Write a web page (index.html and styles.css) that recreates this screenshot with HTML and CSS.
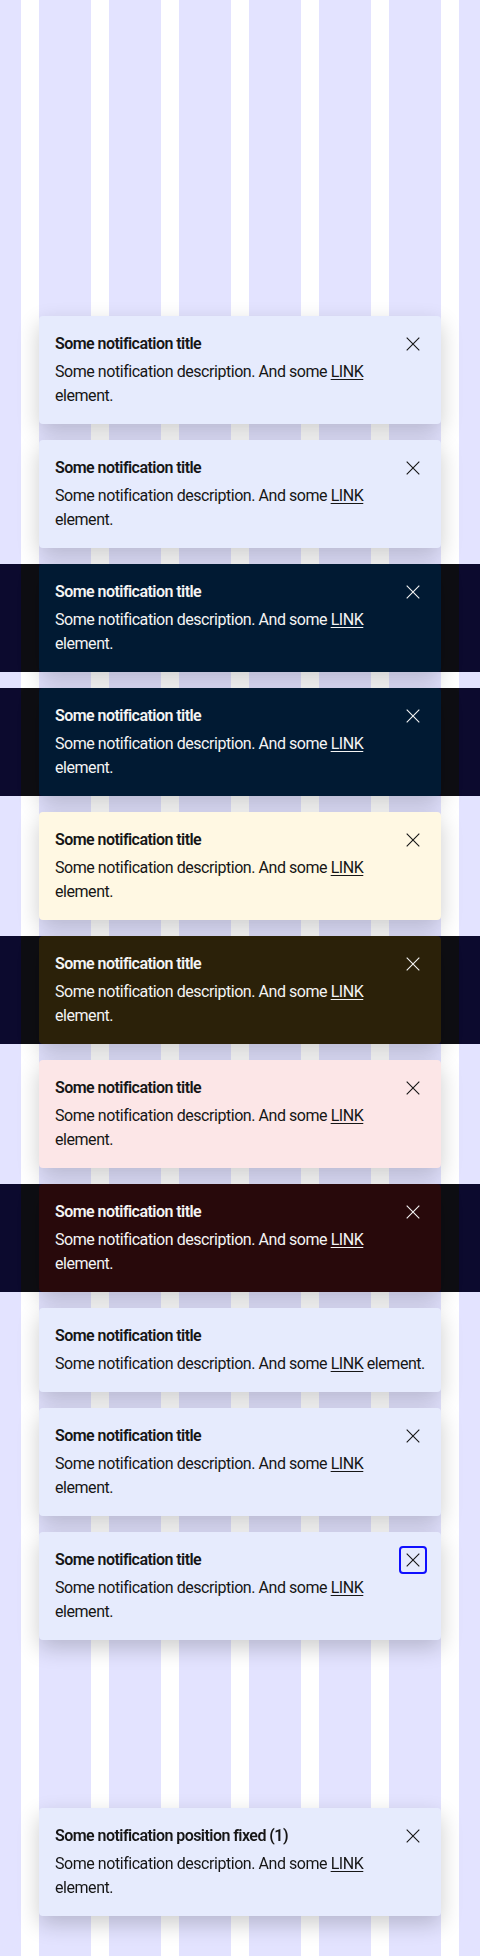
FILE: index.html
```html
<!DOCTYPE html>
<html lang="en">
<head>
<meta charset="utf-8">
<title>Notifications</title>
<link rel="stylesheet" href="styles.css">
</head>
<body>
<main class="stack">

  <div class="notif light">
    <div class="notif-body">
      <div class="notif-title">Some notification title</div>
      <div class="notif-desc">Some notification description. And some <a href="#" class="notif-link">LINK</a> element.</div>
    </div>
    <button class="notif-close" aria-label="Close"><svg viewBox="0 0 14 14" width="14" height="14"><path d="M0.7 0.7L13.3 13.3M13.3 0.7L0.7 13.3"/></svg></button>
  </div>

  <div class="notif light">
    <div class="notif-body">
      <div class="notif-title">Some notification title</div>
      <div class="notif-desc">Some notification description. And some <a href="#" class="notif-link">LINK</a> element.</div>
    </div>
    <button class="notif-close" aria-label="Close"><svg viewBox="0 0 14 14" width="14" height="14"><path d="M0.7 0.7L13.3 13.3M13.3 0.7L0.7 13.3"/></svg></button>
  </div>

  <div class="band">
    <div class="notif dark navy">
      <div class="notif-body">
        <div class="notif-title">Some notification title</div>
        <div class="notif-desc">Some notification description. And some <a href="#" class="notif-link">LINK</a> element.</div>
      </div>
      <button class="notif-close" aria-label="Close"><svg viewBox="0 0 14 14" width="14" height="14"><path d="M0.7 0.7L13.3 13.3M13.3 0.7L0.7 13.3"/></svg></button>
    </div>
  </div>

  <div class="band">
    <div class="notif dark navy">
      <div class="notif-body">
        <div class="notif-title">Some notification title</div>
        <div class="notif-desc">Some notification description. And some <a href="#" class="notif-link">LINK</a> element.</div>
      </div>
      <button class="notif-close" aria-label="Close"><svg viewBox="0 0 14 14" width="14" height="14"><path d="M0.7 0.7L13.3 13.3M13.3 0.7L0.7 13.3"/></svg></button>
    </div>
  </div>

  <div class="notif light warning">
    <div class="notif-body">
      <div class="notif-title">Some notification title</div>
      <div class="notif-desc">Some notification description. And some <a href="#" class="notif-link">LINK</a> element.</div>
    </div>
    <button class="notif-close" aria-label="Close"><svg viewBox="0 0 14 14" width="14" height="14"><path d="M0.7 0.7L13.3 13.3M13.3 0.7L0.7 13.3"/></svg></button>
  </div>

  <div class="band">
    <div class="notif dark brown">
      <div class="notif-body">
        <div class="notif-title">Some notification title</div>
        <div class="notif-desc">Some notification description. And some <a href="#" class="notif-link">LINK</a> element.</div>
      </div>
      <button class="notif-close" aria-label="Close"><svg viewBox="0 0 14 14" width="14" height="14"><path d="M0.7 0.7L13.3 13.3M13.3 0.7L0.7 13.3"/></svg></button>
    </div>
  </div>

  <div class="notif light error">
    <div class="notif-body">
      <div class="notif-title">Some notification title</div>
      <div class="notif-desc">Some notification description. And some <a href="#" class="notif-link">LINK</a> element.</div>
    </div>
    <button class="notif-close" aria-label="Close"><svg viewBox="0 0 14 14" width="14" height="14"><path d="M0.7 0.7L13.3 13.3M13.3 0.7L0.7 13.3"/></svg></button>
  </div>

  <div class="band">
    <div class="notif dark maroon">
      <div class="notif-body">
        <div class="notif-title">Some notification title</div>
        <div class="notif-desc">Some notification description. And some <a href="#" class="notif-link">LINK</a> element.</div>
      </div>
      <button class="notif-close" aria-label="Close"><svg viewBox="0 0 14 14" width="14" height="14"><path d="M0.7 0.7L13.3 13.3M13.3 0.7L0.7 13.3"/></svg></button>
    </div>
  </div>

  <div class="notif light">
    <div class="notif-body">
      <div class="notif-title">Some notification title</div>
      <div class="notif-desc">Some notification description. And some <a href="#" class="notif-link">LINK</a> element.</div>
    </div>
  </div>

  <div class="notif light">
    <div class="notif-body">
      <div class="notif-title">Some notification title</div>
      <div class="notif-desc">Some notification description. And some <a href="#" class="notif-link">LINK</a> element.</div>
    </div>
    <button class="notif-close" aria-label="Close"><svg viewBox="0 0 14 14" width="14" height="14"><path d="M0.7 0.7L13.3 13.3M13.3 0.7L0.7 13.3"/></svg></button>
  </div>

  <div class="notif light">
    <div class="notif-body">
      <div class="notif-title">Some notification title</div>
      <div class="notif-desc">Some notification description. And some <a href="#" class="notif-link">LINK</a> element.</div>
    </div>
    <button class="notif-close is-focused" aria-label="Close"><svg viewBox="0 0 14 14" width="14" height="14"><path d="M0.7 0.7L13.3 13.3M13.3 0.7L0.7 13.3"/></svg></button>
  </div>

</main>

<div class="notif light fixed">
  <div class="notif-body">
    <div class="notif-title">Some notification position fixed (1)</div>
    <div class="notif-desc">Some notification description. And some <a href="#" class="notif-link">LINK</a> element.</div>
  </div>
  <button class="notif-close" aria-label="Close"><svg viewBox="0 0 14 14" width="14" height="14"><path d="M0.7 0.7L13.3 13.3M13.3 0.7L0.7 13.3"/></svg></button>
</div>
</body>
</html>
```

FILE: styles.css
```css
html, body {
  margin: 0;
  padding: 0;
}

body {
  min-height: 1956px;
  font-family: Roboto, "Noto Sans", "Liberation Sans", sans-serif;
  color: #161616;
  background-color: #ffffff;
  background-image: linear-gradient(to right, #e3e3ff 0, #e3e3ff 52px, #ffffff 52px, #ffffff 70px);
  background-size: 70px 100%;
  background-position: 39px 0;
  background-repeat: repeat-x;
}

.stack {
  display: flex;
  flex-direction: column;
  gap: 16px;
  padding-top: 316px;
}

.band {
  padding: 0 39px;
  background-color: #0e0e13;
  background-image: linear-gradient(to right, #0c0a2e 0, #0c0a2e 52px, #0e0e13 52px, #0e0e13 70px);
  background-size: 70px 100%;
  background-position: 39px 0;
  background-repeat: repeat-x;
}

.notif {
  display: flex;
  align-items: flex-start;
  gap: 12px;
  padding: 16px;
  border-radius: 4px;
  box-shadow: 0 8px 22px rgba(0, 0, 0, 0.2);
}

.stack > .notif {
  margin: 0 39px;
}

.notif.light {
  background: #e6ebfd;
  color: #161616;
}

.notif.warning {
  background: #fff8e3;
}

.notif.error {
  background: #fce6e7;
}

.notif.dark {
  color: #f4f4f4;
}

.notif.navy {
  background: #011a33;
}

.notif.brown {
  background: #2b2109;
}

.notif.maroon {
  background: #28090b;
}

.notif.fixed {
  position: fixed;
  left: 39px;
  right: 39px;
  bottom: 40px;
}

.notif-body {
  flex: 1;
  min-width: 0;
}

.notif-title {
  font-size: 16px;
  line-height: 24px;
  font-weight: 600;
  letter-spacing: -0.55px;
  margin-bottom: 4px;
}

.notif-desc {
  font-size: 16px;
  line-height: 24px;
  letter-spacing: -0.45px;
}

.notif-link {
  color: inherit;
  text-decoration: underline;
  text-underline-offset: 2px;
}

.notif-close {
  flex: none;
  width: 28px;
  height: 28px;
  margin: -2px -2px 0 0;
  padding: 0;
  display: flex;
  align-items: center;
  justify-content: center;
  background: transparent;
  border: 2px solid transparent;
  border-radius: 4px;
  color: inherit;
  cursor: pointer;
}

.notif-close svg {
  display: block;
  stroke: currentColor;
  stroke-width: 1.1;
  fill: none;
}

.notif-close.is-focused {
  border-color: #0f0fff;
}
```
